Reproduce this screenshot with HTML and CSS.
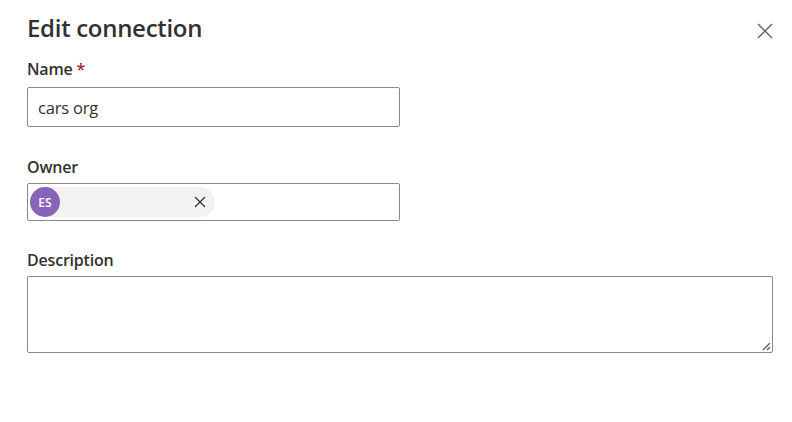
FILE: index.html
```html
<!DOCTYPE html>
<html>
<head>
<meta charset="utf-8">
<link rel="stylesheet" href="styles.css">
</head>
<body>
<div class="panel">
  <div class="header">
    <h1 class="title">Edit connection</h1>
    <button class="close" aria-label="Close">
      <svg width="16" height="16" viewBox="0 0 16 16"><path d="M1 1 L15 15 M15 1 L1 15" stroke="#605e5c" stroke-width="1.3" fill="none"/></svg>
    </button>
  </div>
  <div class="field">
    <label class="label">Name <span class="req">*</span></label>
    <div class="input half"><span class="value">cars org</span></div>
  </div>
  <div class="field owner-field">
    <label class="label">Owner</label>
    <div class="input half picker">
      <div class="chip">
        <span class="avatar">ES</span>
        <span class="chip-x">
          <svg width="12" height="12" viewBox="0 0 12 12"><path d="M1 1 L11 11 M11 1 L1 11" stroke="#323130" stroke-width="1.2" fill="none"/></svg>
        </span>
      </div>
    </div>
  </div>
  <div class="field desc-field">
    <label class="label">Description</label>
    <div class="textarea">
      <svg class="grip" width="10" height="10" viewBox="0 0 10 10"><path d="M9 2 L2 9 M9 6 L6 9" stroke="#555" stroke-width="1.2" fill="none"/></svg>
    </div>
  </div>
</div>
</body>
</html>
```
FILE: styles.css
```css
* { box-sizing: border-box; }
body {
  margin: 0;
  background: #fff;
  font-family: "Open Sans", "Noto Sans", sans-serif;
  color: #323130;
}
.panel {
  width: 792px;
  height: 422px;
  padding: 12px 19px 0 27px;
}
.header {
  display: flex;
  justify-content: space-between;
  align-items: flex-start;
  height: 46px;
}
.title {
  margin: 0;
  font-size: 24px;
  font-weight: 600;
  line-height: 32px;
  letter-spacing: -0.3px;
  color: #323130;
}
.close {
  border: none;
  background: none;
  padding: 0;
  margin-top: 11px;
  width: 16px;
  height: 16px;
  display: flex;
}
.field { display: flex; flex-direction: column; }
.label {
  font-size: 16px;
  font-weight: 600;
  line-height: 22px;
  margin-bottom: 7px;
  letter-spacing: -0.2px;
}
.req { color: #a4262c; }
.input {
  border: 1px solid #8a8886;
  border-radius: 2px;
  height: 40px;
  display: flex;
  align-items: center;
}
.half { width: 373px; }
.value {
  padding-left: 10px;
  font-size: 16.5px;
  letter-spacing: -0.2px;
}
.owner-field { margin-top: 29px; }
.owner-field .label { margin-bottom: 5px; }
.picker { height: 38px; padding-left: 2px; }
.chip {
  width: 185px;
  height: 30px;
  border-radius: 15px;
  background: #f3f2f1;
  display: flex;
  align-items: center;
  justify-content: space-between;
}
.avatar {
  width: 30px;
  height: 30px;
  border-radius: 50%;
  background: #8764b8;
  color: #fff;
  font-size: 12px;
  font-weight: 600;
  display: flex;
  align-items: center;
  justify-content: center;
}
.chip-x {
  width: 12px;
  height: 12px;
  margin-right: 9px;
  display: flex;
}
.desc-field { margin-top: 28px; }
.desc-field .label { margin-bottom: 5px; }
.textarea {
  width: 746px;
  height: 77px;
  border: 1px solid #8a8886;
  border-radius: 2px;
  position: relative;
}
.grip { position: absolute; right: 1px; bottom: 1px; }
```
